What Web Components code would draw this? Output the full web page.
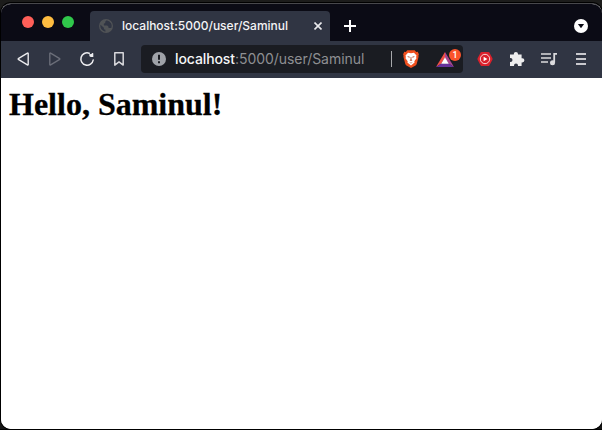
<!DOCTYPE html>
<html lang="en"><head><meta charset="utf-8"><title>localhost:5000/user/Saminul</title>
<style>html,body{margin:0;height:100%;overflow:hidden;background:#1c1c1b}</style></head>
<body>
<browser-window>
  <tab-strip slot="tabs"><browser-tab>localhost:5000/user/Saminul</browser-tab></tab-strip>
  <tool-bar slot="toolbar"><address-bar><span slot="host">localhost</span><span slot="path">:5000/user/Saminul</span></address-bar></tool-bar>
  <page-view>Hello, Saminul!</page-view>
</browser-window>
<script>
const define = (name, html) => customElements.define(name, class extends HTMLElement {
  constructor() {
    super();
    const t = document.createElement('template');
    t.innerHTML = html;
    this.attachShadow({mode: 'open'}).append(t.content.cloneNode(true));
  }
});

const icons = {
  back: [14, 16, '<path d="M12.2 2.6q0-.9-.8-.4L2.7 7.3q-1 .7 0 1.4l8.7 5.1q.8.5.8-.4z" fill="none" stroke="#e9e9ec" stroke-width="1.4" stroke-linejoin="round"/>'],
  forward: [14, 16, '<path d="M1.8 2.6q0-.9.8-.4l8.7 5.1q1 .7 0 1.4l-8.7 5.1q-.8.5-.8-.4z" fill="none" stroke="#6a6d78" stroke-width="1.4" stroke-linejoin="round"/>'],
  reload: [16, 16, '<path d="M10.2 2.2A6.2 6.2 0 1 0 14.2 9" fill="none" stroke="#ededf0" stroke-width="1.5" stroke-linecap="round"/><path d="M10.4 2.8 12 3.2l1.3-1.2q1-.4 1 .5v3.6h-2.2q-2.3-.2-1.7-3.3z" fill="#ededf0"/>'],
  bookmark: [12, 16, '<path d="M1.8 1.8h8.4v12.3L6 10.9l-4.2 3.2z" fill="none" stroke="#d9d9dd" stroke-width="1.5" stroke-linejoin="round"/>'],
  info: [14, 14, '<circle cx="7" cy="7" r="7" fill="#9fa2a8"/><path d="M6 2.8h2v5H6zM6 9.2h2v2H6z" fill="#1a1c22"/>'],
  lion: [16, 18, '<path d="M4.3.3h7.4l1.5 1.6 1.5-.1 1.2 2.5-.5 1.5.2 1-1.9 7.2q-.3.9-1.1 1.4L8 18l-4.6-2.6q-.8-.5-1.1-1.4L.4 6.8l.2-1L.1 4.3l1.2-2.5 1.5.1z" fill="#f0501f"/><path d="m5 2.7 3 .5 3-.5 2.5 2.7-.4 1.5.4 1.4-2.2 3 .3 1.2L8 15.4l-3.6-2.9.3-1.2-2.2-3 .4-1.4-.4-1.5z" fill="#fff"/><path d="m4.1 6 2.7.8-.6 1.3zm7.8 0-2.7.8.6 1.3zM7.6 7h.8l.1 2.6.9.6L8 11.1l-1.4-.9.9-.6zM6.1 12 8 12.8l1.9-.8L8 13.5z" fill="#b85638"/>'],
  bat: [18, 15, '<path d="M9 0 0 15l5.4-3.4L9 5.7z" fill="#f04f45"/><path d="m9 0 9 15-5.4-3.4L9 5.7z" fill="#a9458f"/><path d="M0 15h18l-5.4-3.4H5.4z" fill="#67329b"/><path d="m9 5.2 3.8 6.5H5.2z" fill="#fff"/>'],
  music: [16, 14, '<path d="M4.6 0h6.8Q12 0 12.3.5L15.3 6q.5 1 0 2l-3 5.5q-.3.5-.9.5H4.6q-.6 0-.9-.5L.7 8q-.5-1 0-2l3-5.5Q4 0 4.6 0z" fill="#d9202b"/><circle cx="8" cy="7" r="4.7" fill="none" stroke="#f8d5d7" stroke-width="1"/><path d="m6.6 4.7 3.8 2.3-3.8 2.3z" fill="#fff"/>'],
  puzzle: [16, 16, '<path d="M1 3.4h3.8V3a2.1 2.1 0 0 1 4.2 0v.4h3.6v3.8h.7a2.1 2.1 0 0 1 0 4.2h-.7V15H9v-.6a2 2 0 0 0-4 0v.6H1v-4h.5a2 2 0 0 0 0-4H1z" fill="#ededee"/>'],
  queue: [16, 14, '<path d="M0 2h10M0 6h10M0 10h7" stroke="#dadadd" stroke-width="1.6"/><path d="M16 1.9h-2.8v8.5" fill="none" stroke="#dadadd" stroke-width="1.8"/><circle cx="11.5" cy="10.8" r="2.5" fill="#dadadd"/>'],
  menu: [10, 14, '<path d="M0 2h10M0 7h10M0 12h10" stroke="#c8c8cd" stroke-width="1.8"/>'],
  globe: [14, 14, '<circle cx="7" cy="7" r="7" fill="#505356"/><path d="M7.8 1.3 6.3 2.5v1.3L4.7 5l.4 1.4h3.1l1.3 1.3v1.2h2.8A5.6 5.6 0 0 0 8.2 1.4M1.5 5.8l3.4 3v1.5l1.5.4v2A5.7 5.7 0 0 1 1.5 5.8" fill="#303543"/>'],
  close: [8, 8, '<path d="m.5.5 7 7m0-7-7 7" stroke="#e9e9ec" stroke-width="1.6"/>'],
  plus: [12, 12, '<path d="M6 0v12M0 6h12" stroke="#fff" stroke-width="2"/>'],
  tabs: [14, 14, '<circle cx="7" cy="7" r="7" fill="#fff"/><path d="M3.9 5h6.2L7 9.2z" fill="#0b0b15"/>']
};
customElements.define('ui-icon', class extends HTMLElement {
  connectedCallback() {
    const [w, h, body] = icons[this.getAttribute('name')];
    this.attachShadow({mode: 'open'}).innerHTML = `<style>:host{display:block;flex:none}svg{display:block}</style><svg width="${w}" height="${h}" viewBox="0 0 ${w} ${h}">${body}</svg>`;
  }
});

define('browser-window', `<style>
:host{display:block;box-sizing:border-box;height:430px;padding:3px 0 1px 1px;background:linear-gradient(#1c1c1b 0 20px,#000 20px 410px,#151515 410px 429px,#000 429px)}
.w{display:flex;flex-direction:column;box-sizing:border-box;height:426px;border-top:1px solid #48484c;border-radius:10px;overflow:hidden;background:#fff;box-shadow:0 0 0 1px #000}
</style><div class="w"><slot name="tabs"></slot><slot name="toolbar"></slot><slot></slot></div>`);

define('tab-strip', `<style>
:host{display:flex;flex:none;height:37px;background:#0b0b15;box-sizing:border-box;padding:0 14px 0 21px}
.lights{display:flex;gap:8px;padding-top:12px;width:68px}
i{width:12px;height:12px;border-radius:50%;background:#ff5f58}i:nth-child(2){background:#ffbd40}i:nth-child(3){background:#30c84b}
.add{margin:16px 0 0 14px}.list{margin:15px 0 0 auto}
</style><div class="lights"><i></i><i></i><i></i></div><slot></slot><ui-icon class="add" name="plus"></ui-icon><ui-icon class="list" name="tabs"></ui-icon>`);

define('browser-tab', `<style>
:host{display:flex;align-items:center;box-sizing:border-box;width:240px;height:30px;margin-top:7px;padding:0 8px 0 9px;border-radius:4px 4px 0 0;background:#303543;color:#f4f4f6;font:500 12px/30px Inter,sans-serif}
span{margin-left:9px;white-space:nowrap;letter-spacing:0}.x{margin-left:auto}
</style><ui-icon name="globe"></ui-icon><span><slot></slot></span><ui-icon class="x" name="close"></ui-icon>`);

define('tool-bar', `<style>
:host{display:grid;grid-template-columns:32px 32px 32px 32px 334px 32px 32px 32px 32px;justify-items:center;align-items:center;flex:none;height:37px;box-sizing:border-box;padding:0 0 1px 6px;background:#303543}
</style><ui-icon name="back"></ui-icon><ui-icon name="forward"></ui-icon><ui-icon name="reload"></ui-icon><ui-icon name="bookmark"></ui-icon><slot></slot><ui-icon name="music"></ui-icon><ui-icon name="puzzle"></ui-icon><ui-icon name="queue"></ui-icon><ui-icon name="menu"></ui-icon>`);

define('address-bar', `<style>
:host{display:flex;align-items:center;box-sizing:border-box;width:322px;height:28px;padding:0 8px 0 11px;border-radius:4px;background:#1a1c22;color:#f5f5f7;font:400 14px/28px Inter,sans-serif}
.url{margin-left:9px;white-space:nowrap;letter-spacing:-.05px}.host{font-weight:500;letter-spacing:-.1px}.path{color:#8e8f92}
.line{width:1px;height:16px;background:#a7a8ab;margin:0 11px 0 auto}
.bat{position:relative;margin-left:17px;width:19px}
b{position:absolute;left:13px;top:-3px;width:12px;height:12px;border-radius:50%;background:#fb542b;color:#fff;font:500 9px/12px Roboto,sans-serif;text-align:center}
</style><ui-icon name="info"></ui-icon><span class="url"><span class="host"><slot name="host"></slot></span><span class="path"><slot name="path"></slot></span></span><span class="line"></span><ui-icon name="lion"></ui-icon><span class="bat"><ui-icon name="bat"></ui-icon><b>1</b></span>`);

define('page-view', `<style>
:host{display:block;flex:1;background:#fff;color:#000}
h1{margin:0;padding:8px;font:bold 32px/37px "Liberation Serif",serif;-webkit-text-stroke:.3px #000}
</style><h1><slot></slot></h1>`);
</script>
</body></html>
